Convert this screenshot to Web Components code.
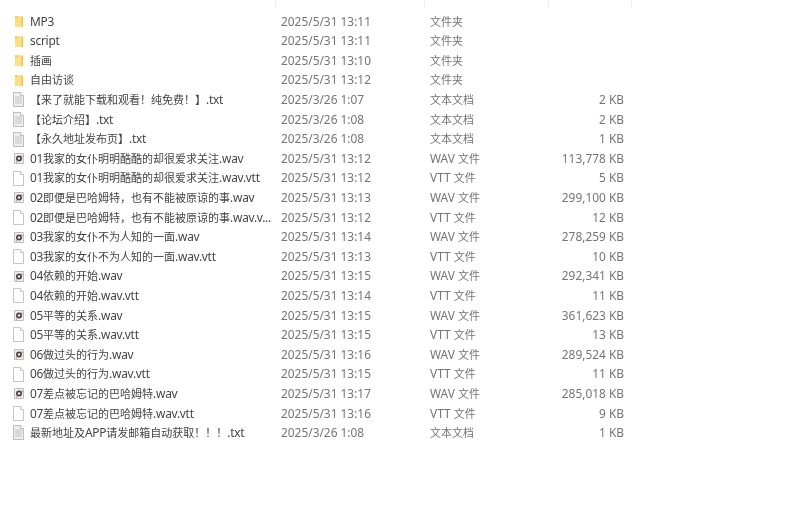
<!DOCTYPE html>
<html lang="zh"><head><meta charset="utf-8"><title>文件列表</title>
<style>html,body{margin:0;padding:0;background:#fff;height:512px;overflow:hidden}</style></head>
<body><file-list></file-list>
<template id="row-t"><style>
:host{display:grid;grid-template-columns:30px 251px 149px 118px 76px;height:19.6px;align-items:center;font:11.9px/19.6px "Noto Sans","Noto Sans CJK SC",sans-serif;color:#444}
.ic{display:flex;padding-left:12px}
svg{display:block;width:13px;height:15px}
.n,.d,.t,.s{white-space:nowrap}
.n{overflow:hidden;width:245px;letter-spacing:-.25px}
.d,.t,.s{color:#757575}
.s{text-align:right}
.c{font-size:11px;letter-spacing:0}
</style><span class="ic"></span><span class="n"></span><span class="d"></span><span class="t"></span><span class="s"></span></template>
<script>
const ICONS={
folder:'<svg viewBox="0 0 13 15"><path d="M3 2.5h8v10.5H3z" fill="#f4c443"/><path d="M3 2.5h6.5V13H3z" fill="#fbe086"/><path d="M3 2.5h2l.8 1.2H3z" fill="#eab93c"/></svg>',
txt:'<svg viewBox="0 0 13 15"><path d="M1.5.5h7l3 3v11h-10z" fill="#efefef" stroke="#bdbdbd"/><path d="M3 5h7M3 7h7M3 9h7M3 11h7" stroke="#c4c4c4"/><path d="M8.5.5v3h3" fill="#fff" stroke="#bdbdbd"/></svg>',
vtt:'<svg viewBox="0 0 13 15"><path d="M1.5.5h7l3 3v11h-10z" fill="#fff" stroke="#c6c6c6"/><path d="M8.5.5v3h3" fill="#f6f6f6" stroke="#c6c6c6"/></svg>',
wav:'<svg viewBox="0 0 13 15"><path d="M2.5 2.5h9v10h-9z" fill="#f1eeee" stroke="#c4bcbc"/><circle cx="7" cy="7.5" r="3" fill="#474242"/><circle cx="7" cy="7.5" r="1.3" fill="#f0e6e6"/><path d="M9.6 4.6l.9 1M4 10.6l.8.7" stroke="#b5382f"/></svg>'};
class FileRow extends HTMLElement{
 constructor(){super();this.attachShadow({mode:'open'}).append(document.getElementById('row-t').content.cloneNode(true))}
 fill(el,text){
  for(const part of text.split(/([\u3000-\u9fff\uff00-\uffef]+)/)){
   if(!part)continue;
   if(/[\u3000-\u9fff\uff00-\uffef]/.test(part)){const s=document.createElement('span');s.className='c';s.textContent=part;el.append(s);}
   else el.append(part);
  }
 }
 connectedCallback(){
  const r=this.shadowRoot,g=s=>r.querySelector(s);
  g('.ic').innerHTML=ICONS[this.getAttribute('icon')];
  this.fill(g('.n'),this.getAttribute('name'));
  g('.d').textContent=this.getAttribute('date');
  this.fill(g('.t'),this.getAttribute('type'));
  g('.s').textContent=this.getAttribute('size')||'';
 }
}
customElements.define('file-row',FileRow);
class FileList extends HTMLElement{
 constructor(){super();this.attachShadow({mode:'open'}).innerHTML=`<style>
 :host{display:block;width:800px;filter:blur(.3px)}
 .head{display:grid;grid-template-columns:275px 149px 124px 83px;height:7px;margin-bottom:4.7px}
 .head i{border-right:1px solid #ededed;margin-right:-1px}
 </style><div class="head"><i></i><i></i><i></i><i></i></div><div class="rows"></div>`;}
 connectedCallback(){
  const F='文件夹',T='文本文档',W='WAV 文件',V='VTT 文件';
  const data=[
  ['folder','MP3','2025/5/31 13:11',F,''],
  ['folder','script','2025/5/31 13:11',F,''],
  ['folder','插画','2025/5/31 13:10',F,''],
  ['folder','自由访谈','2025/5/31 13:12',F,''],
  ['txt','【来了就能下载和观看！纯免费！】.txt','2025/3/26 1:07',T,'2 KB'],
  ['txt','【论坛介绍】.txt','2025/3/26 1:08',T,'2 KB'],
  ['txt','【永久地址发布页】.txt','2025/3/26 1:08',T,'1 KB'],
  ['wav','01我家的女仆明明酷酷的却很爱求关注.wav','2025/5/31 13:12',W,'113,778 KB'],
  ['vtt','01我家的女仆明明酷酷的却很爱求关注.wav.vtt','2025/5/31 13:12',V,'5 KB'],
  ['wav','02即便是巴哈姆特，也有不能被原谅的事.wav','2025/5/31 13:13',W,'299,100 KB'],
  ['vtt','02即便是巴哈姆特，也有不能被原谅的事.wav.v...','2025/5/31 13:12',V,'12 KB'],
  ['wav','03我家的女仆不为人知的一面.wav','2025/5/31 13:14',W,'278,259 KB'],
  ['vtt','03我家的女仆不为人知的一面.wav.vtt','2025/5/31 13:13',V,'10 KB'],
  ['wav','04依赖的开始.wav','2025/5/31 13:15',W,'292,341 KB'],
  ['vtt','04依赖的开始.wav.vtt','2025/5/31 13:14',V,'11 KB'],
  ['wav','05平等的关系.wav','2025/5/31 13:15',W,'361,623 KB'],
  ['vtt','05平等的关系.wav.vtt','2025/5/31 13:15',V,'13 KB'],
  ['wav','06做过头的行为.wav','2025/5/31 13:16',W,'289,524 KB'],
  ['vtt','06做过头的行为.wav.vtt','2025/5/31 13:15',V,'11 KB'],
  ['wav','07差点被忘记的巴哈姆特.wav','2025/5/31 13:17',W,'285,018 KB'],
  ['vtt','07差点被忘记的巴哈姆特.wav.vtt','2025/5/31 13:16',V,'9 KB'],
  ['txt','最新地址及APP请发邮箱自动获取！！！.txt','2025/3/26 1:08',T,'1 KB']];
  const box=this.shadowRoot.querySelector('.rows');
  for(const [icon,name,date,type,size] of data){
   const e=document.createElement('file-row');
   Object.entries({icon,name,date,type,size}).forEach(([k,v])=>e.setAttribute(k,v));
   box.append(e);
  }
 }
}
customElements.define('file-list',FileList);
</script></body></html>
